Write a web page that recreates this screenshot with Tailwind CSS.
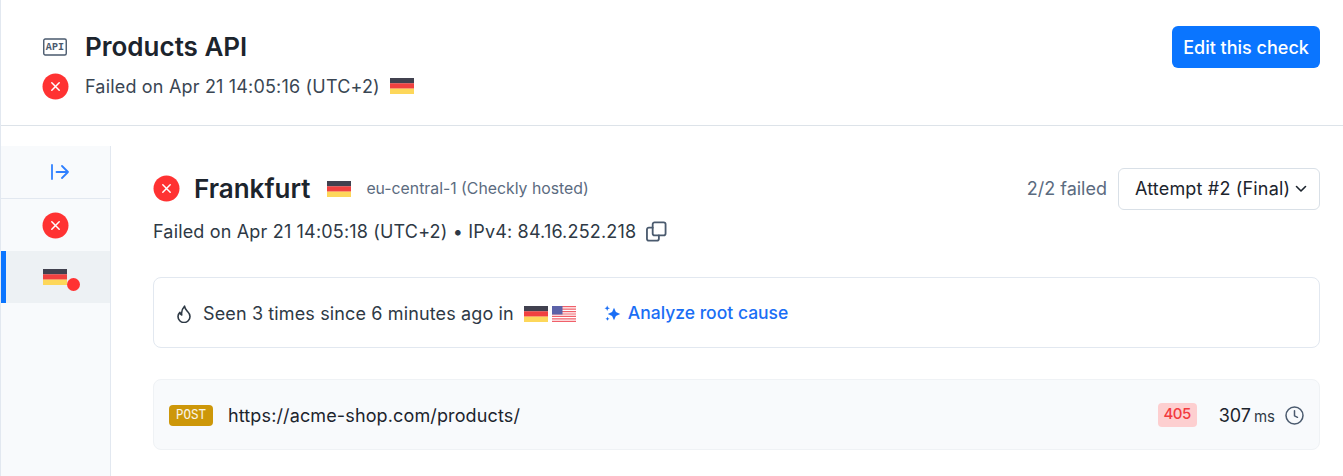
<!DOCTYPE html>
<html lang="en">
<head>
  <meta charset="UTF-8" />
  <title>Products API</title>
  <script src="https://cdn.jsdelivr.net/npm/@tailwindcss/browser@4"></script>
</head>
<body class="bg-white h-[476px] overflow-hidden font-['Inter',sans-serif] text-[#1f2933]">
  <div class="h-[476px] border-l border-[#e2e8f0] flex flex-col">

    <!-- Header -->
    <header class="h-[126px] shrink-0 border-b border-[#dde3e9] pl-[42px] pr-[23px] pt-[26px] flex justify-between items-start">
      <div>
        <div class="flex items-center h-[42px]">
          <svg class="w-6 h-[18px] text-[#4a5a6e]" viewBox="0 0 24 18" fill="none">
            <rect x="0.75" y="1" width="22.5" height="16" rx="1.5" stroke="currentColor" stroke-width="1.4"/>
            <text x="12" y="12.4" text-anchor="middle" font-family="Liberation Mono, monospace" font-size="10" font-weight="700" fill="currentColor" letter-spacing="0.2">API</text>
          </svg>
          <h1 class="ml-[18px] text-[26px] leading-[32px] font-semibold text-[#1c242d]">Products API</h1>
        </div>
        <div class="flex items-center mt-[5px] h-[26px]">
          <svg class="w-[27px] h-[27px] -ml-px" viewBox="0 0 27 27"><circle cx="13.5" cy="13.5" r="13" fill="#ff3232"/><path d="M9.8 9.8l7.4 7.4M17.2 9.8l-7.4 7.4" stroke="#fff" stroke-width="1.5" stroke-linecap="round"/></svg>
          <span class="ml-[16px] text-[18px] tracking-[0.18px] text-[#3a4653]">Failed on Apr 21 14:05:16 (UTC+2)</span>
          <svg class="ml-[10px] w-6 h-4" viewBox="0 0 24 16"><rect width="24" height="5.4" fill="#41414f"/><rect y="5.3" width="24" height="5.4" fill="#f14140"/><rect y="10.6" width="24" height="5.4" fill="#fdd75a"/></svg>
        </div>
      </div>
      <button class="h-[42px] w-[148px] rounded-md bg-[#0a75ff] text-white text-[18px] font-medium">Edit this check</button>
    </header>

    <div class="flex flex-1 pt-5 min-h-0">
      <!-- Sidebar -->
      <aside class="w-[110px] shrink-0 bg-[#f8fafc] border-r border-[#e2e8f0]">
        <div class="h-[53px] border-b border-[#e2e8f0] flex items-center justify-center">
          <svg class="ml-[9px] w-[18px] h-4 text-[#2f80ff]" viewBox="0 0 18 16" fill="none" stroke="currentColor" stroke-width="1.8" stroke-linecap="round" stroke-linejoin="round">
            <path d="M1 1v14M5.500 8h11.500M11 2l6 6-6 6"/>
          </svg>
        </div>
        <div class="h-[52px] flex items-center justify-center">
          <svg class="w-[27px] h-[27px]" viewBox="0 0 27 27"><circle cx="13.5" cy="13.5" r="13" fill="#ff3232"/><path d="M9.8 9.8l7.4 7.4M17.2 9.8l-7.4 7.4" stroke="#fff" stroke-width="1.5" stroke-linecap="round"/></svg>
        </div>
        <div class="h-[52px] bg-[#edf1f4] border-l-[5px] border-[#0a75ff] flex items-center justify-center">
          <div class="relative -ml-[7px]">
            <svg class="w-6 h-4 block" viewBox="0 0 24 16"><rect width="24" height="5.4" fill="#41414f"/><rect y="5.3" width="24" height="5.4" fill="#f14140"/><rect y="10.6" width="24" height="5.4" fill="#fdd75a"/></svg>
            <span class="absolute left-[24px] top-[9px] w-[13px] h-[13px] rounded-full bg-[#ff3232]"></span>
          </div>
        </div>
      </aside>

      <!-- Main -->
      <main class="flex-1 pl-[42px] pr-[23px] min-w-0">
        <div class="flex items-center justify-between mt-[21px] h-[43px]">
          <div class="flex items-center">
            <svg class="w-[27px] h-[27px]" viewBox="0 0 27 27"><circle cx="13.5" cy="13.5" r="13" fill="#ff3232"/><path d="M9.8 9.8l7.4 7.4M17.2 9.8l-7.4 7.4" stroke="#fff" stroke-width="1.5" stroke-linecap="round"/></svg>
            <h2 class="ml-[14px] text-[26px] font-semibold text-[#1c242d]">Frankfurt</h2>
            <svg class="ml-[17px] w-6 h-4" viewBox="0 0 24 16"><rect width="24" height="5.4" fill="#41414f"/><rect y="5.3" width="24" height="5.4" fill="#f14140"/><rect y="10.6" width="24" height="5.4" fill="#fdd75a"/></svg>
            <span class="ml-[15px] text-[15.8px] text-[#5b6b80]">eu-central-1 (Checkly hosted)</span>
          </div>
          <div class="flex items-center">
            <span class="text-[18px] text-[#5b6b80]">2/2 failed</span>
            <div class="ml-[11px] w-[202px] h-[42px] border border-[#d9e0e7] rounded-md pl-4 pr-3 flex items-center justify-between">
              <span class="text-[18px] tracking-[0.17px] text-[#1c242d]">Attempt #2 (Final)</span>
              <svg class="w-3 h-3 text-[#1c242d]" viewBox="0 0 12 12" fill="none" stroke="currentColor" stroke-width="1.6" stroke-linecap="round" stroke-linejoin="round"><path d="M1.500 3.500l4.500 4.500 4.500-4.500"/></svg>
            </div>
          </div>
        </div>

        <div class="flex items-center mt-[9px] h-[24px]">
          <span class="text-[18px] tracking-[0.17px] text-[#2e3945]">Failed on Apr 21 14:05:18 (UTC+2) • IPv4: 84.16.252.218</span>
          <svg class="ml-[10px] w-[21px] h-[21px] text-[#4a5a6e]" viewBox="0 0 22 22" fill="none" stroke="currentColor" stroke-width="1.9" stroke-linecap="round" stroke-linejoin="round">
            <rect x="7" y="1.500" width="13.500" height="13.500" rx="2"/>
            <path d="M7 7H3a2 2 0 0 0-2 2v9.500a2 2 0 0 0 2 2h8.500a2 2 0 0 0 2-2V15"/>
          </svg>
        </div>

        <!-- Seen card -->
        <div class="mt-[34px] h-[71px] border border-[#e2e8f0] rounded-lg flex items-center pl-[22px] pt-[2px]">
          <svg class="w-4 h-[18px] text-[#2e3945]" viewBox="0 0 16 18" fill="none" stroke="currentColor" stroke-width="1.6" stroke-linecap="round" stroke-linejoin="round">
            <path d="M8.500 1.200c.3 2.800 1.600 3.900 3.300 5.600 1.300 1.300 2.200 3 2.200 4.700a6 6 0 0 1-12 0c0-1.700.8-3.200 1.900-4.200.2 1.400.9 2.200 1.800 2.600C5.200 7 6.300 3.600 8.500 1.200z"/>
          </svg>
          <span class="ml-[11px] text-[18px] tracking-[0.13px] text-[#2e3945]">Seen 3 times since 6 minutes ago in</span>
          <svg class="ml-[10px] w-6 h-4" viewBox="0 0 24 16"><rect width="24" height="5.4" fill="#41414f"/><rect y="5.3" width="24" height="5.4" fill="#f14140"/><rect y="10.6" width="24" height="5.4" fill="#fdd75a"/></svg>
          <svg class="ml-[4px] w-6 h-4" viewBox="0 0 24 16">
            <rect width="24" height="16" fill="#fff"/>
            <path d="M0 0.6h24M0 3.100h24M0 5.600h24M0 8h24M0 10.400h24M0 12.900h24M0 15.400h24" stroke="#f0606a" stroke-width="1.2"/>
            <rect width="10.500" height="8.500" fill="#5c62a8"/>
          </svg>
          <svg class="ml-[28px] w-[18px] h-[18px] text-[#1a6ef5]" viewBox="0 0 18 18" fill="currentColor">
            <path d="M10 2.800l1.900 4.300 4.300 1.900-4.300 1.900-1.900 4.300-1.900-4.300-4.300-1.900 4.300-1.900z"/>
            <path d="M3.200 0.600l.8 1.900 1.900.8-1.900.8-.8 1.900-.8-1.900-1.900-.8 1.900-.8z"/>
            <path d="M3.500 11.800l.6 1.400 1.400.6-1.400.6-.6 1.400-.6-1.400-1.400-.6 1.400-.6z"/>
          </svg>
          <span class="ml-[6px] text-[17.5px] font-medium text-[#1a6ef5]">Analyze root cause</span>
        </div>

        <!-- Request row -->
        <div class="mt-[31px] h-[71px] bg-[#f8fafc] border border-[#eff2f5] rounded-lg flex items-center pl-[15px] pr-[15px] pt-[2px]">
          <span class="w-[44px] h-[21px] rounded bg-[#cd9709] text-white/90 text-[12.5px] font-['Liberation_Mono',monospace] flex items-center justify-center"><span class="inline-block scale-y-120">POST</span></span>
          <span class="ml-[15px] text-[18px] tracking-[0.13px] text-[#1c242d]">https://acme-shop.com/products/</span>
          <span class="ml-auto -mt-[2px] w-[39px] h-[24px] rounded bg-[#fdcfd0] text-[#f23a3e] text-[15px] tracking-[-0.5px] font-medium flex items-center justify-center">405</span>
          <span class="ml-[22px] flex items-baseline">
            <span class="text-[18px] text-[#1c242d]">307</span>
            <span class="ml-[3px] text-[15px] text-[#2e3945]">ms</span>
          </span>
          <svg class="ml-[10px] w-[19px] h-[19px] text-[#4a5a6e]" viewBox="0 0 19 19" fill="none" stroke="currentColor" stroke-width="1.5" stroke-linecap="round" stroke-linejoin="round">
            <circle cx="9.500" cy="9.500" r="8.500"/>
            <path d="M9.500 4.800v5l3 1.500"/>
          </svg>
        </div>
      </main>
    </div>
  </div>
</body>
</html>
